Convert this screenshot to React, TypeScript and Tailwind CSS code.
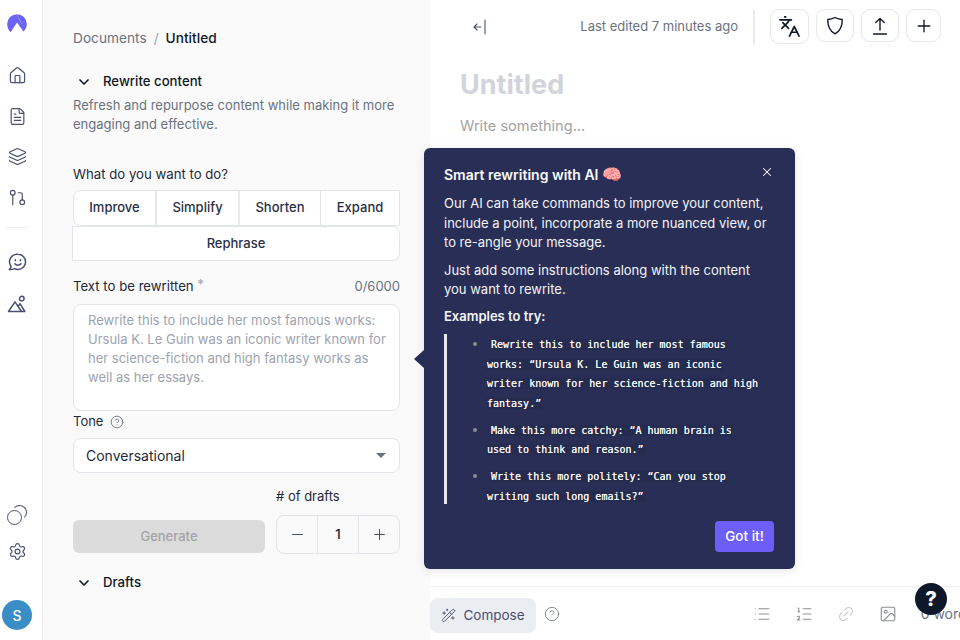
import type { ReactNode } from "react";
import {
  ChevronDown,
  CircleHelp,
  FileText,
  House,
  Image,
  Languages,
  Layers,
  Link2,
  List,
  ListOrdered,
  Minus,
  GitPullRequest,
  Plus,
  Settings,
  WandSparkles,
  X,
} from "lucide-react";

const examples = [
  ["Rewrite this to include her most famous", "works: “Ursula K. Le Guin was an iconic", "writer known for her science-fiction and high", "fantasy.”"],
  ["Make this more catchy: “A human brain is", "used to think and reason.”"],
  ["Write this more politely: “Can you stop", "writing such long emails?”"],
];

const Logo = () => (
  <svg width="20" height="20" viewBox="0 0 20 20">
    <path d="M10 0.2a9.8 9.8 0 0 1 9.8 9.8c0 3.2-1.3 5.8-3.4 7.6L10 8.6 3.6 18.2C1.4 16.2 0.2 13.2 0.2 10A9.8 9.8 0 0 1 10 0.2z" fill="#6c63f5" />
    <path d="M10 1l5 9" stroke="#a9a4fa" strokeWidth="0.6" />
  </svg>
);

const ChatSmile = () => (
  <svg width="20" height="20" viewBox="0 0 20 20" fill="none" stroke="currentColor" strokeWidth="1.5" strokeLinecap="round" strokeLinejoin="round">
    <path d="M11 2.2a7.6 7.6 0 0 1 0 15.2c-1.2 0-2.4-.3-3.4-.8-1.5.8-3.4 1.2-5.3.9 1-.9 1.6-2 1.8-3.2A7.6 7.6 0 0 1 11 2.2z" />
    <path d="M7.8 11.7c1.6 1.9 4.6 1.9 6.2 0" />
    <path d="M8.3 7.8v1M13.5 7.8v1" />
  </svg>
);

const MountainSun = () => (
  <svg width="20" height="20" viewBox="0 0 20 20" fill="none" stroke="currentColor" strokeWidth="1.5" strokeLinecap="round" strokeLinejoin="round">
    <path d="M1.5 17.5 8 7.8l6.5 9.7z" />
    <path d="M11.2 12.2 13 9.6l4.8 7.9h-3.3" />
    <circle cx="14.8" cy="4.6" r="2.3" />
  </svg>
);

const Sidebar = () => (
  <aside className="w-[43px] h-full shrink-0 bg-white border-r border-[#eef0f3] pr-[8px] flex flex-col items-center text-[#4b5070]">
    <div className="mt-[14px]">
      <Logo />
    </div>
    <div className="mt-[32px] flex flex-col items-center gap-[21.5px]">
      <House size={19} strokeWidth={1.5} />
      <FileText size={19} strokeWidth={1.5} />
      <Layers size={19} strokeWidth={1.5} />
      <GitPullRequest size={19} strokeWidth={1.5} />
    </div>
    <div className="w-[22px] h-px bg-[#eceef1] mt-[20px]" />
    <div className="mt-[24px] flex flex-col items-center gap-[22px]">
      <ChatSmile />
      <MountainSun />
    </div>
    <div className="mt-auto flex flex-col items-center">
      <div className="relative w-[20px] h-[20px]">
        <div className="absolute left-0 bottom-0 w-[15px] h-[15px] rounded-full border-[1.5px] border-[#4b5070]" />
        <div className="absolute right-0 top-0 w-[15px] h-[15px] rounded-full border-[1.5px] border-[#4b5070] border-l-transparent border-b-transparent" />
      </div>
      <Settings size={19} strokeWidth={1.5} className="mt-[17px]" />
      <div className="mt-[39px] mb-[10px] w-[30px] h-[30px] rounded-full bg-[#3a8dc5] text-white text-[14px] font-medium flex items-center justify-center">
        S
      </div>
    </div>
  </aside>
);

const Panel = () => (
  <section className="w-[387px] h-full shrink-0 bg-[#fafafa] pl-[30px] pr-[30px] pt-[29px] text-[14px] text-[#111827]">
    <div className="h-[18px] leading-[18px] text-[13.7px] flex gap-[7px]">
      <span className="text-[#6b7280]">Documents</span>
      <span className="text-[#9ca3af]">/</span>
      <span className="font-medium">Untitled</span>
    </div>
    <div className="mt-[26px] h-[18px] flex items-center text-[13.2px] font-medium">
      <ChevronDown size={16} strokeWidth={2.5} className="ml-[3px] mr-[11px]" />
      Rewrite content
    </div>
    <p className="mt-[5px] text-[13px] leading-[19px] text-[#6b7280]">
      Refresh and repurpose content while making it more engaging and effective.
    </p>
    <div className="mt-[31px] h-[18px] leading-[18px] text-[13.2px] text-[#1f2937]">What do you want to do?</div>
    <div className="mt-[7px] h-[36px] flex bg-white border border-[#e2e5ea] rounded-tl-[8px] rounded-bl-[8px] text-[13px] font-medium text-[#2b2f45]">
      <div className="w-[83px] flex items-center justify-center border-r-2 border-[#e8eaee]">Improve</div>
      <div className="w-[83px] flex items-center justify-center border-r-2 border-[#e8eaee]">Simplify</div>
      <div className="w-[81px] flex items-center justify-center border-r border-[#e2e5ea]">Shorten</div>
      <div className="flex-1 flex items-center justify-center">Expand</div>
    </div>
    <div className="-ml-px h-[35px] flex items-center justify-center bg-white border border-[#e2e5ea] rounded-tr-[8px] rounded-br-[8px] text-[13px] font-medium text-[#2b2f45]">
      Rephrase
    </div>
    <div className="mt-[17px] h-[18px] flex justify-between items-center text-[13.2px]">
      <span className="text-[#1f2937]">
        Text to be rewritten <span className="text-[#9ca3af] relative -top-[2px]">*</span>
      </span>
      <span className="text-[#6b7280] text-[13px]">0/6000</span>
    </div>
    <div className="mt-[8px] h-[107px] bg-white border border-[#e2e5ea] rounded-[8px] pl-[14px] pr-[12px] pt-[6px] text-[13px] leading-[19px] text-[#9ca3af]">
      Rewrite this to include her most famous works: Ursula K. Le Guin was an iconic writer known for her science-fiction and high fantasy works as well as her essays.
    </div>
    <div className="mt-[2px] h-[18px] flex items-center gap-[7px] text-[13px] text-[#1f2937]">
      Tone <CircleHelp size={14} strokeWidth={1.5} className="text-[#6b7280]" />
    </div>
    <div className="mt-[7px] h-[35px] bg-white border border-[#e2e5ea] rounded-[8px] pl-[12px] pr-[13px] flex items-center justify-between text-[14px] text-[#1f2937]">
      Conversational
      <div className="w-0 h-0 border-l-[5px] border-r-[5px] border-t-[5px] border-l-transparent border-r-transparent border-t-[#6b7280]" />
    </div>
    <div className="mt-[14px] flex gap-[11px] items-end">
      <button className="w-[192px] h-[33px] mb-[1px] rounded-[6px] bg-[#dbdbdb] text-[#a3a3a8] text-[13px] font-medium">Generate</button>
      <div className="flex-1">
        <div className="h-[18px] leading-[18px] text-[13px] text-[#1f2937]"># of drafts</div>
        <div className="mt-[10px] h-[39px] bg-[#fafafa] border border-[#e2e5ea] rounded-[8px] flex items-stretch">
          <div className="w-[41px] flex items-center justify-center border-r border-[#e2e5ea] text-[#4b5070]">
            <Minus size={17} strokeWidth={1.5} />
          </div>
          <div className="w-[41px] flex items-center justify-center border-r border-[#e2e5ea] text-[13px] font-medium">1</div>
          <div className="flex-1 flex items-center justify-center text-[#4b5070]">
            <Plus size={17} strokeWidth={1.5} />
          </div>
        </div>
      </div>
    </div>
    <div className="mt-[20px] h-[18px] flex items-center text-[13.2px] font-medium">
      <ChevronDown size={16} strokeWidth={2.5} className="ml-[3px] mr-[11px]" />
      Drafts
    </div>
  </section>
);

const HeaderButton = ({ className, children }: { className: string; children: ReactNode }) => (
  <div className={`${className} flex items-center justify-center bg-white border border-[#e5e7eb] rounded-[9px] text-[#111827]`}>
    {children}
  </div>
);

const Editor = () => (
  <main className="flex-1 min-w-0 h-full bg-white flex flex-col overflow-hidden">
    <header className="h-[60px] shrink-0 flex items-center pl-[42px] pr-[19px] pb-[7px]">
      <svg width="16" height="16" viewBox="0 0 16 16" fill="none" stroke="#4b5070" strokeWidth="1.1" strokeLinecap="round" strokeLinejoin="round">
        <path d="M2 8h7M5 5 2 8l3 3" />
        <path d="M13 1v14" />
      </svg>
      <span className="ml-auto text-[13px] text-[#6b7280]">Last edited 7 minutes ago</span>
      <div className="w-[2px] h-[34px] bg-[#e8eaee] mx-[15px]" />
      <div className="flex gap-[7px] items-start">
        <HeaderButton className="w-[39px] h-[35px]"><Languages size={23} strokeWidth={1.75} /></HeaderButton>
        <HeaderButton className="w-[38px] h-[33px]">
          <svg width="18" height="20" viewBox="0 0 18 20" fill="none" stroke="#111827" strokeWidth="1.4" strokeLinejoin="round">
            <path d="M9 1.5c2.4 1.3 4.8 1.9 7.2 2 .3 6.3-2.2 11.5-7.2 14.4C4 15 1.5 9.8 1.8 3.5c2.4-.1 4.8-.7 7.2-2z" />
          </svg>
        </HeaderButton>
        <HeaderButton className="w-[38px] h-[33px]">
          <svg width="16" height="20" viewBox="0 0 16 20" fill="none" stroke="#111827" strokeWidth="1.4" strokeLinecap="round" strokeLinejoin="round">
            <path d="M8 14V2.5M3.8 6.5 8 2.5l4.2 4" />
            <path d="M1.5 18h13" />
          </svg>
        </HeaderButton>
        <HeaderButton className="w-[35px] h-[33px]"><Plus size={20} strokeWidth={1.6} /></HeaderButton>
      </div>
    </header>
    <div className="pl-[30px] mt-[9px] h-[32px] leading-[32px] text-[27px] font-bold text-[#d1d5db]">Untitled</div>
    <div className="pl-[30px] mt-[15px] h-[20px] leading-[20px] text-[14.6px] text-[#a3a3a3]">Write something...</div>
    <div className="flex-1" />
    <footer className="h-[54px] shrink-0 border-t border-[#f0f1f3] flex items-center overflow-hidden">
      <div className="mt-[4px] w-[106px] h-[35px] rounded-[8px] bg-[#eaedf2] flex items-center justify-center gap-[7px] text-[13.5px] text-[#4b5070]">
        <WandSparkles size={15} strokeWidth={1.5} />
        Compose
      </div>
      <CircleHelp size={16} strokeWidth={1.25} className="ml-[8px] mt-[1px] text-[#6b7280]" />
      <div className="ml-auto flex items-center gap-[24px] text-[#8b8f98] whitespace-nowrap -mr-[14px]">
        <List size={18} strokeWidth={1.5} />
        <ListOrdered size={18} strokeWidth={1.5} />
        <Link2 size={18} strokeWidth={1.5} className="text-[#c7c9ce] -rotate-45" />
        <Image size={18} strokeWidth={1.5} />
        <span className="text-[14px] text-[#6b7280]">0 words</span>
      </div>
    </footer>
  </main>
);

const Popover = () => (
  <div className="absolute left-[424px] top-[148px] w-[371px] h-[421px] bg-[#292e56] rounded-[6px] shadow-[0_2px_10px_rgba(0,0,0,0.1)] text-white pl-[20px] pr-[21px] pt-[17px]">
    <div className="absolute -left-[10px] top-[202px] w-0 h-0 border-y-[9px] border-r-[10px] border-y-transparent border-r-[#292e56]" />
    <X size={14} strokeWidth={1.75} className="absolute right-[21px] top-[17px]" />
    <div className="h-[18px] leading-[18px] text-[14px] font-semibold text-[#f9fafb]">
      Smart rewriting with AI <span className="text-[16px]">🧠</span>
    </div>
    <p className="mt-[11px] text-[13px] leading-[19.5px] text-[#f3f4f6]">
      Our AI can take commands to improve your content, include a point, incorporate a more nuanced view, or to re-angle your message.
    </p>
    <p className="mt-[8px] text-[13px] leading-[19.5px] text-[#f3f4f6]">
      Just add some instructions along with the content you want to rewrite.
    </p>
    <p className="mt-[7px] text-[13px] leading-[19.5px] font-semibold text-[#f3f4f6]">Examples to try:</p>
    <div className="mt-[8px] border-l-[3px] border-[#e5e7eb] h-[170px] pl-[39px] pt-[1px] font-['DejaVu_Sans_Mono',monospace] text-[10px] text-[#f3f4f6] [text-shadow:0_0_0.6px_#ffffff]">
      {examples.map((lines, i) => (
        <div key={i} className={`relative ${i > 0 ? "mt-[7.5px]" : ""}`}>
          <div className="absolute -left-[13px] top-[7px] w-[4px] h-[4px] rounded-full bg-[#8b8b93]" />
          {lines.map((line, j) => (
            <div key={j} className={`h-[19.5px] leading-[19.5px] whitespace-nowrap ${j === 0 ? "pl-[4px]" : ""}`}>
              <span className="bg-[#262b50] px-[1px]">{line}</span>
            </div>
          ))}
        </div>
      ))}
    </div>
    <div className="mt-[17px] flex justify-end">
      <button className="w-[59px] h-[31px] rounded-[4px] bg-[#6c5ef6] text-[13.5px] font-medium text-white">Got it!</button>
    </div>
  </div>
);

export default function App() {
  return (
    <div className="relative w-[960px] h-[640px] flex overflow-hidden bg-white font-['Inter',sans-serif]">
      <Sidebar />
      <Panel />
      <Editor />
      <Popover />
      <div className="absolute left-[915px] top-[583px] w-[32px] h-[32px] rounded-full bg-[#0f172a] text-white text-[20px] font-extrabold flex items-center justify-center">
        ?
      </div>
    </div>
  );
}
